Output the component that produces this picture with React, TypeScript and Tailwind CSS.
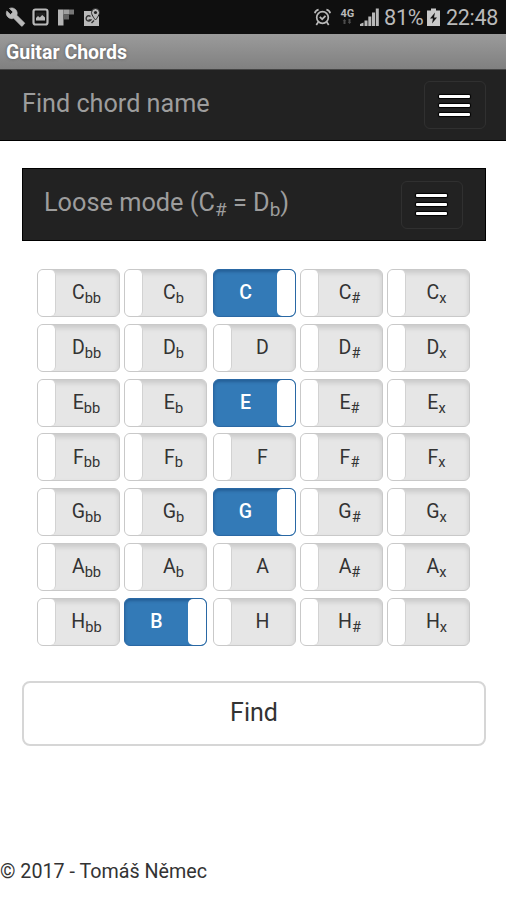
import { clsx } from "clsx";

type Note = { name: string; sub?: string; on?: boolean };

const letters = ["C", "D", "E", "F", "G", "A", "H"];
const selected = ["C", "E", "G", "Hb"];

const rows: Note[][] = letters.map((letter) =>
  ["bb", "b", "", "#", "x"].map((sub) => {
    const on = selected.includes(letter + sub);
    return letter + sub === "Hb" ? { name: "B", on } : { name: letter, sub, on };
  })
);

const StatusBar = () => (
  <div className="flex h-[34px] items-center justify-between bg-[#0f0f0f] pl-[5px] pr-[8px] text-[#b9b9b9]">
    <div className="flex items-center">
      <svg width="21" height="20" viewBox="0 0 24 24" fill="currentColor" stroke="currentColor" strokeWidth="0.8">
        <path d="M22.7 19l-9.1-9.1c.9-2.3.4-5-1.5-6.9-2-2-5-2.4-7.4-1.3L9 6 6 9 1.6 4.7C.4 7.1.9 10.1 2.9 12.1c1.9 1.9 4.6 2.4 6.9 1.5l9.1 9.1c.4.4 1 .4 1.4 0l2.3-2.3c.5-.4.5-1.1.1-1.4z" />
      </svg>
      <svg className="ml-[6px]" width="17" height="18" viewBox="0 0 17 18">
        <rect x="1.500" y="1.500" width="14" height="15" rx="2" fill="none" stroke="currentColor" strokeWidth="2.200" />
        <path d="M4 4.500h9v8H4z" fill="#222" />
        <path d="M4 12.500V10l2-2 1.800 1.500L10.200 7 13 9.500v3z" fill="currentColor" />
      </svg>
      <svg className="ml-[8px]" width="18" height="17" viewBox="0 0 18 17">
        <path d="M1 .5h5.500v16H1z" fill="#b5b5b5" />
        <path d="M6.500 .5H12v5H6.500z" fill="#a0a0a0" />
        <path d="M12 .5h5v5h-5z" fill="#777" />
        <path d="M6.500 5.500H12v5H6.500z" fill="#646464" />
      </svg>
      <svg className="ml-[8px]" width="18" height="19" viewBox="0 0 18 19">
        <path d="M1 3h15v15H1z" fill="currentColor" />
        <path d="M12.500 .5a4 4 0 0 1 4 4c0 2.800-4 7.500-4 7.500s-4-4.700-4-7.500a4 4 0 0 1 4-4z" fill="currentColor" stroke="#222" strokeWidth="1" />
        <circle cx="12.500" cy="4.500" r="1.600" fill="#222" />
        <path d="M7.500 8.500a2.600 2.600 0 1 0 .3 3.500H5.500M8.500 15l2.500-2.500" fill="none" stroke="#333" strokeWidth="1.400" />
      </svg>
    </div>
    <div className="flex items-center">
      <svg width="17" height="18" viewBox="0 0 17 18" fill="none" stroke="currentColor" strokeWidth="1.700">
        <circle cx="8.500" cy="9.500" r="5.800" />
        <path d="M.8 5.200C1.200 3.400 2.500 2 4.600 1.600M16.200 5.200c-.4-1.800-1.700-3.200-3.800-3.600M4.300 14L2.300 17M12.700 14l2 3M5.800 8.800l2.400 2.400 3.300-3.400" />
      </svg>
      <div className="ml-[9px] flex w-[15px] flex-col items-center">
        <span className="text-[11px] font-bold leading-[10px]">4G</span>
        <svg width="10" height="5" viewBox="0 0 10 5" fill="#4c4c4c">
          <path d="M2.500 0L4.300 2H3.500v3h-2V2H.7zM7.500 5L5.700 3h.8V0h2v3h.8z" />
        </svg>
      </div>
      <svg className="ml-[5px]" width="19" height="18" viewBox="0 0 19 18" fill="currentColor">
        <path d="M0 18v-2l3.500-1.500V18zM4.500 12.500h3V18h-3zM8.300 8.500h3V18h-3zM12 4.500h3V18h-3zM15.800 .5h3V18h-3z" />
      </svg>
      <span className="ml-[5px] w-[40px] whitespace-nowrap pt-px text-[21.800px] leading-none tracking-[-0.3px]">81%</span>
      <svg className="ml-[3px]" width="13" height="18" viewBox="0 0 13 18">
        <path d="M4 .5h5v2h4V18H0V2.500h4z" fill="#c9c9c9" />
        <path d="M8 4.500L3 10.500h3l-1 5 5-6H7z" fill="#141414" />
      </svg>
      <span className="ml-[6px] pt-px text-[21.500px] leading-none tracking-[-0.3px]">22:48</span>
    </div>
  </div>
);

const MenuButton = () => (
  <button className="flex h-[48px] w-[62px] flex-col items-center justify-center gap-[6px] rounded-[6px] border border-[#303030] pr-px">
    <span className="h-[3px] w-[31px] rounded-[1px] bg-white shadow-[0_0_1px_1px_#000]" />
    <span className="h-[3px] w-[31px] rounded-[1px] bg-white shadow-[0_0_1px_1px_#000]" />
    <span className="h-[3px] w-[31px] rounded-[1px] bg-white shadow-[0_0_1px_1px_#000]" />
  </button>
);

const Sub = ({ children }: { children: React.ReactNode }) => (
  <sub className="bottom-[-0.25em] text-[75%]">{children}</sub>
);

const Toggle = ({ name, sub, on }: Note) => (
  <button
    className={clsx(
      "flex h-[48px] overflow-hidden rounded-[6px] border text-[19.500px] leading-none",
      on
        ? "flex-row-reverse border-[#2a68a4] bg-[#337ab7] text-white shadow-[inset_0_2px_3px_#255f97]"
        : "border-[#c9c9c9] bg-[#e6e6e6] text-[#333] shadow-[inset_0_3px_5px_rgba(0,0,0,0.125)]"
    )}
  >
    <span
      className={clsx(
        "h-full w-[18px] shrink-0 bg-white",
        on ? "rounded-[5px]" : "rounded-r-[5px] border-r border-[#d2d2d2]"
      )}
    />
    <span className={clsx("flex-1 self-center text-center", on ? "font-medium" : "pr-[2px]")}>
      {name}
      {sub && <Sub>{sub}</Sub>}
    </span>
  </button>
);

export default function App() {
  return (
    <div className="flex h-[900px] w-[506px] flex-col overflow-hidden bg-white font-['Roboto',sans-serif] text-[#333]">
      <StatusBar />
      <div className="flex h-[35px] items-center bg-gradient-to-b from-[#9b9b9b] to-[#808080] pl-[6px] pt-[2px] text-[19.500px] font-bold text-white [text-shadow:0_0_3px_#555]">
        Guitar Chords
      </div>
      <nav className="flex h-[72px] items-center justify-between border-y border-t-[#444] border-b-black bg-[#222] pl-[22px] pr-[20px]">
        <span className="pb-[2px] text-[25.200px] text-[#9d9d9d]">Find chord name</span>
        <MenuButton />
      </nav>

      <main className="flex flex-1 flex-col px-[21px] pt-[27px]">
        <nav className="ml-px flex h-[73px] w-[464px] items-center justify-between border border-black bg-[#222] pl-[21px] pr-[22px]">
          <span className="pb-[3px] text-[25.300px] text-[#9d9d9d]">
            Loose mode (C<Sub>#</Sub> = D<Sub>b</Sub>)
          </span>
          <MenuButton />
        </nav>

        <div className="mx-[16px] mt-[28px] flex flex-col gap-[6.800px]">
          {rows.map((row, i) => (
            <div key={i} className="grid w-[433px] grid-cols-[87px_89px_87px_87px_83px]">
              {row.map((note, j) => (
                <div key={j} className="grid w-[83px]">
                  <Toggle {...note} />
                </div>
              ))}
            </div>
          ))}
        </div>

        <button className="ml-px mt-[35px] h-[65px] w-[464px] rounded-[8px] border-2 border-[#d6d6d6] bg-white pb-[2px] text-[25px]">
          Find
        </button>
      </main>

      <footer className="pb-[13px] text-[19.700px] leading-[30px]">© 2017 - Tomáš Němec</footer>
    </div>
  );
}
